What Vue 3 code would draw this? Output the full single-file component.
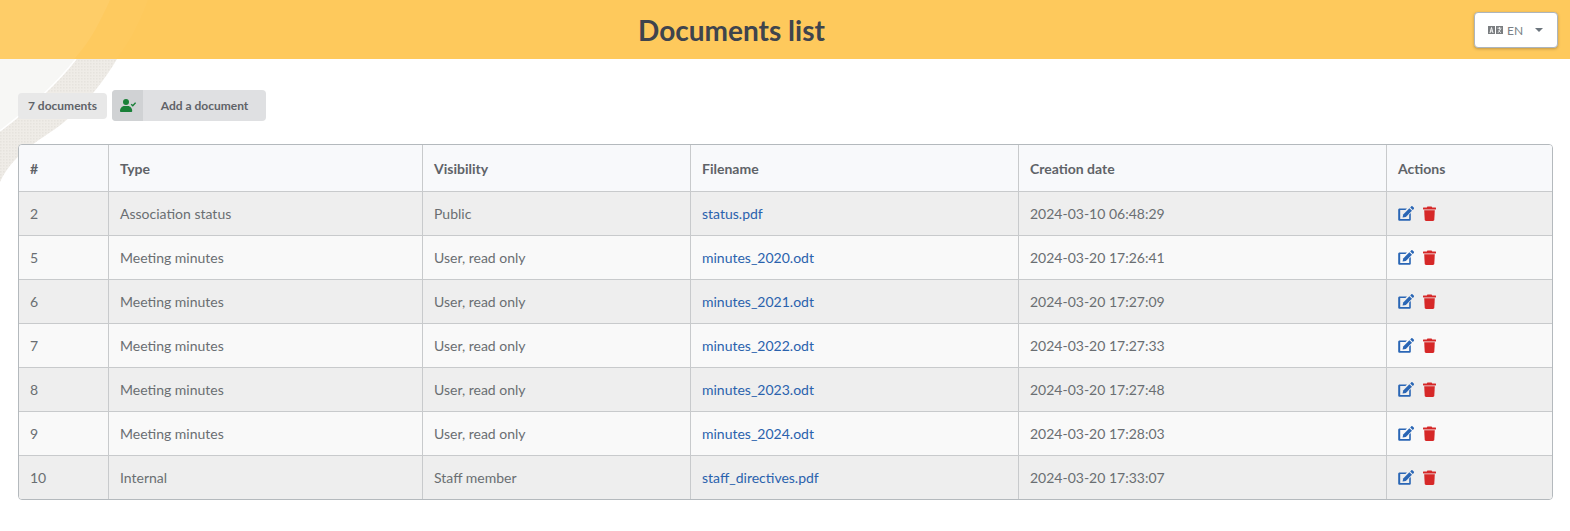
<template>
  <div class="page">
    <svg class="swoosh" width="160" height="190" viewBox="0 0 160 190">
      <defs>
        <pattern id="dots" width="3" height="3" patternUnits="userSpaceOnUse">
          <rect width="3" height="3" fill="#efece7" />
          <rect width="1.5" height="1.5" fill="#e6e3dd" />
        </pattern>
      </defs>
      <path d="M148 0L117 59C105 80 85 105 63 123C45 138 15 150 0 182V0Z" fill="url(#dots)" />
      <path d="M76 59C58 82 30 108 0 131V59Z" fill="#f7f7f5" />
      <path d="M76 59C58 82 30 108 0 131" fill="none" stroke="#fff" stroke-width="1.5" />
    </svg>

    <header class="topbar">
      <svg class="swoosh-top" width="150" height="59" viewBox="0 0 150 59">
        <path d="M148 0C140 22 130 42 116 59H0V0Z" fill="#ffffff" opacity="0.02" />
        <path d="M110 0C100 22 90 42 74 59H0V0Z" fill="#ffffff" opacity="0.06" />
      </svg>
      <h1 class="title">Documents list</h1>
      <button class="lang" type="button">
        <svg class="lang-icon" width="15" height="8" viewBox="0 0 15 8">
          <rect width="7" height="8" fill="#7a7d80" />
          <rect x="8" width="7" height="8" fill="#7a7d80" />
          <path d="M2 7L3.5 1.5L5 7M2.6 5H4.4" fill="none" stroke="#fff" stroke-width="0.9" />
          <path d="M9.5 2.2H13.5M11.5 1V3.5M10 6.8L12.8 3M10.5 4.5L13 6.8" fill="none" stroke="#fff" stroke-width="0.8" />
        </svg>
        <span class="lang-code">EN</span>
        <span class="caret"></span>
      </button>
    </header>

    <main class="content">
      <div class="toolbar">
        <span class="count">{{ docs.length }} documents</span>
        <button class="add" type="button">
          <span class="add-icon">
            <svg width="16" height="13" viewBox="0 0 16 13">
              <circle cx="6" cy="3" r="3" fill="#198038" />
              <path d="M0 12.2C0 9.2 2 7 4.4 7H7.8C10.2 7 12.2 9.2 12.2 12.2C12.2 12.7 11.8 13 11.4 13H.8C.4 13 0 12.7 0 12.2Z" fill="#198038" />
              <path d="M11.2 5.2L12.8 6.8L15.6 3.6" fill="none" stroke="#198038" stroke-width="1.4" />
            </svg>
          </span>
          <span class="add-label">Add a document</span>
        </button>
      </div>

      <div class="table-wrap">
        <table class="docs">
          <colgroup>
            <col v-for="w in widths" :key="w" :width="w" />
          </colgroup>
          <thead>
            <tr>
              <th v-for="h in headers" :key="h">{{ h }}</th>
            </tr>
          </thead>
          <tbody>
            <tr v-for="d in docs" :key="d.id">
              <td>{{ d.id }}</td>
              <td>{{ d.type }}</td>
              <td>{{ d.visibility }}</td>
              <td><a class="file" href="#">{{ d.file }}</a></td>
              <td>{{ d.date }}</td>
              <td>
                <span class="actions">
                  <svg width="17" height="15" viewBox="0 0 17 15">
                    <path d="M1.6 2.4H9L7.4 4H2.2V13H11.2V8.6L12.8 7V13.4C12.8 14.2 12.2 14.8 11.4 14.8H1.6C.8 14.8 .2 14.2 .2 13.4V3.8C.2 3 .8 2.4 1.6 2.4Z" fill="#2a66b5" />
                    <path d="M5.2 8.4L11.4 2.2L14 4.8L7.8 11L4.6 11.6Z" fill="#2a66b5" />
                    <path d="M12.2 1.4L13.2.4C13.6 0 14.2 0 14.6.4L15.8 1.6C16.2 2 16.2 2.6 15.8 3L14.8 4Z" fill="#2a66b5" />
                  </svg>
                  <svg width="13" height="15" viewBox="0 0 13 15">
                    <path d="M4.4.4H8.6L9.2 1.6H12.6C12.9 1.6 13 1.8 13 2.1V3C13 3.3 12.9 3.4 12.6 3.4H.4C.1 3.4 0 3.3 0 3V2.1C0 1.8.1 1.6.4 1.6H3.8Z" fill="#d62828" />
                    <path d="M1.2 4.3H11.8L11.3 13.7C11.2 14.4 10.7 14.9 10 14.9H3C2.3 14.9 1.8 14.4 1.7 13.7Z" fill="#d62828" />
                  </svg>
                </span>
              </td>
            </tr>
          </tbody>
        </table>
      </div>
    </main>
  </div>
</template>

<script setup>
const headers = ['#', 'Type', 'Visibility', 'Filename', 'Creation date', 'Actions']
const widths = [89, 314, 268, 328, 368, 166]

const docs = [
  { id: 2, type: 'Association status', visibility: 'Public', file: 'status.pdf', date: '2024-03-10 06:48:29' },
  { id: 5, type: 'Meeting minutes', visibility: 'User, read only', file: 'minutes_2020.odt', date: '2024-03-20 17:26:41' },
  { id: 6, type: 'Meeting minutes', visibility: 'User, read only', file: 'minutes_2021.odt', date: '2024-03-20 17:27:09' },
  { id: 7, type: 'Meeting minutes', visibility: 'User, read only', file: 'minutes_2022.odt', date: '2024-03-20 17:27:33' },
  { id: 8, type: 'Meeting minutes', visibility: 'User, read only', file: 'minutes_2023.odt', date: '2024-03-20 17:27:48' },
  { id: 9, type: 'Meeting minutes', visibility: 'User, read only', file: 'minutes_2024.odt', date: '2024-03-20 17:28:03' },
  { id: 10, type: 'Internal', visibility: 'Staff member', file: 'staff_directives.pdf', date: '2024-03-20 17:33:07' }
]
</script>

<style>
html,
body {
  margin: 0;
  background: #fff;
}
</style>

<style scoped>
.page {
  position: relative;
  min-height: 531px;
  font-family: Lato, "Liberation Sans", sans-serif;
  font-size: 14px;
  color: #6a6e72;
  overflow: hidden;
}

.swoosh {
  position: absolute;
  top: 0;
  left: 0;
}

.swoosh-top {
  position: absolute;
  top: 0;
  left: 0;
}

.topbar {
  position: relative;
  height: 59px;
  background: #fec95c;
  display: flex;
  align-items: center;
  justify-content: flex-end;
  padding: 0 12px 0 0;
  box-sizing: border-box;
}

.title {
  position: absolute;
  left: 0;
  width: 1463px;
  margin: 0;
  text-align: center;
  font-size: 28px;
  font-weight: 700;
  color: #3f444d;
}

.lang {
  position: relative;
  width: 84px;
  height: 36px;
  margin-top: 1px;
  display: flex;
  align-items: center;
  padding: 0 0 0 13px;
  box-sizing: border-box;
  background: #fff;
  border: 1px solid #adb5bd;
  border-radius: 4px;
  box-shadow: 0 1px 3px rgba(0, 0, 0, 0.25);
  font-family: inherit;
  font-size: 12px;
  color: #7a7f85;
}

.lang-code {
  margin-left: 4px;
}

.caret {
  margin-left: 12px;
  border-top: 4px solid #6c757d;
  border-left: 4px solid transparent;
  border-right: 4px solid transparent;
}

.content {
  position: relative;
  padding: 31px 17px 0 18px;
}

.toolbar {
  display: flex;
  align-items: center;
  gap: 5px;
  height: 31px;
}

.count {
  height: 26px;
  width: 89px;
  display: flex;
  align-items: center;
  justify-content: center;
  background: #e8e8e8;
  border-radius: 4px;
  font-size: 12px;
  font-weight: 700;
  color: #5f6368;
}

.add {
  width: 154px;
  height: 31px;
  padding: 0;
  display: flex;
  align-items: stretch;
  border: 0;
  border-radius: 4px;
  overflow: hidden;
  background: #dfe0e2;
  font-family: inherit;
  font-size: 12px;
  font-weight: 700;
  color: #5f6368;
}

.add-icon {
  width: 31px;
  display: flex;
  align-items: center;
  justify-content: center;
  background: #d0d2d4;
}

.add-label {
  flex: 1;
  display: flex;
  align-items: center;
  justify-content: center;
}

.table-wrap {
  margin-top: 23px;
  border: 1px solid #b4b9bd;
  border-radius: 4px;
  overflow: hidden;
  background: #fff;
}

.docs {
  width: 100%;
  table-layout: fixed;
  border-collapse: collapse;
}

.docs th,
.docs td {
  padding: 0 11.5px;
  text-align: left;
  border-left: 1px solid #c8cacc;
  border-top: 1px solid #c8cacc;
  box-sizing: border-box;
}

.docs th:first-child,
.docs td:first-child {
  padding-left: 11px;
  border-left: 0;
}

.docs thead th {
  border-top: 0;
  height: 46px;
  padding-top: 2px;
  background: #f8f9fb;
  font-weight: 700;
  color: #5f6368;
}

.docs tbody td {
  height: 44px;
}

.docs tbody tr:nth-child(odd) td {
  background: #eeeeee;
}

.docs tbody tr:nth-child(even) td {
  background: #f9f9f9;
}

.file {
  color: #2a62ad;
  text-decoration: none;
}

.actions {
  display: flex;
  align-items: center;
  gap: 8px;
}
</style>
